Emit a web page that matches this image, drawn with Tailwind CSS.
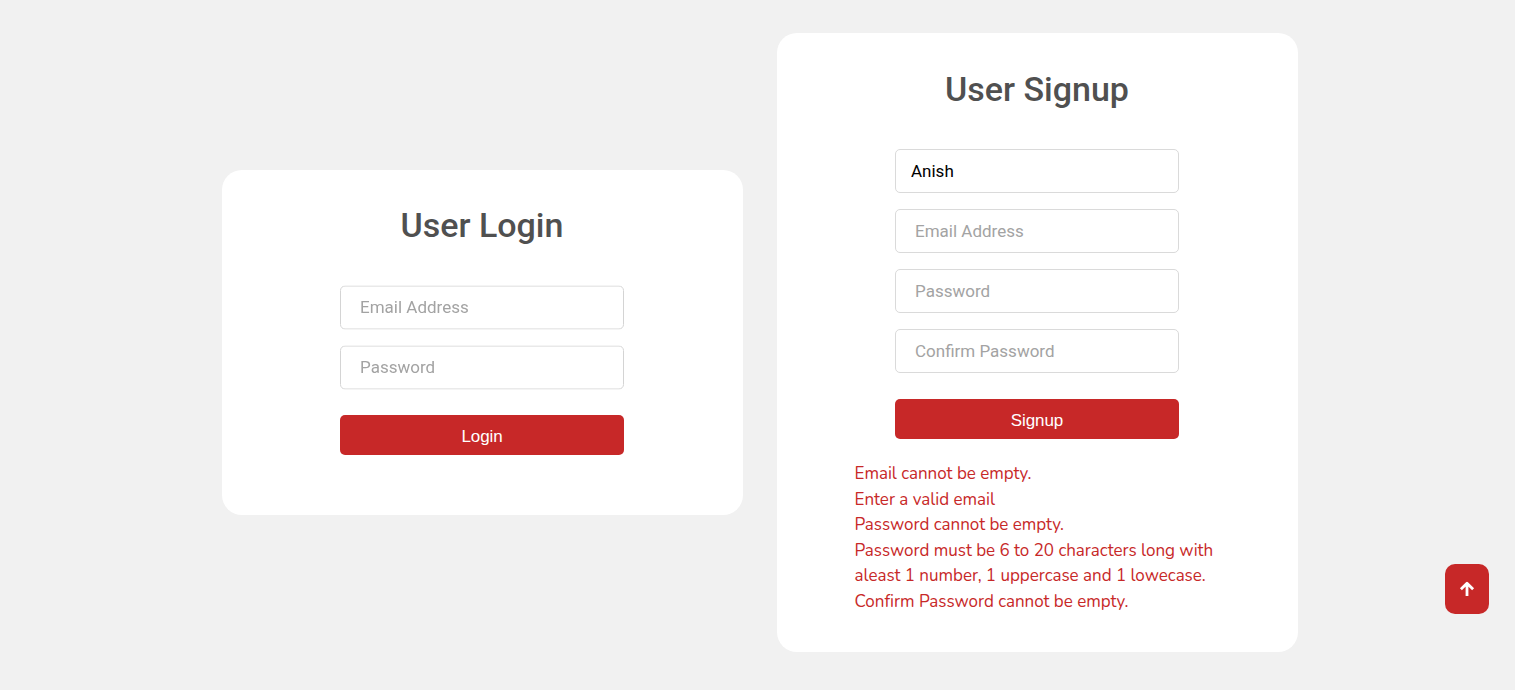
<!DOCTYPE html>
<html lang="en">
<head>
<meta charset="utf-8">
<title>Login and Signup</title>
<script src="https://cdn.jsdelivr.net/npm/@tailwindcss/browser@4"></script>
</head>
<body class="bg-[#f1f1f1] font-[Roboto,sans-serif]">
<main class="flex h-[690px] items-center justify-center gap-[34px] pb-[5px] pl-[5px]">
  <section class="flex h-[345px] w-[521px] flex-col items-center rounded-[20px] bg-white pt-[35px] pr-px">
    <h2 class="h-[41px] text-[34px] leading-[41px] font-medium text-[#505050]">User Login</h2>
    <form class="mt-[39px] flex w-[284px] flex-col gap-4">
      <input class="h-[44px] translate-y-[0.5px] rounded-[5px] border border-[#d4d4d4] px-[19px] pb-[2px] text-[17px] will-change-transform placeholder:text-[#a3a3a3]" placeholder="Email Address">
      <input class="h-[44px] translate-y-[0.5px] rounded-[5px] border border-[#d4d4d4] px-[19px] pb-[2px] text-[17px] will-change-transform placeholder:text-[#a3a3a3]" placeholder="Password">
      <button type="button" class="mt-[10px] h-10 rounded-[5px] bg-[#c72828] pt-[4px] font-['Liberation_Sans',sans-serif] text-[17px] tracking-[-0.1px] text-white">Login</button>
    </form>
  </section>
  <section class="flex h-[619px] w-[521px] flex-col items-center rounded-[20px] bg-white pt-[36px] pr-px">
    <h2 class="h-[41px] text-[34px] leading-[41px] font-medium text-[#505050]">User Signup</h2>
    <form class="mt-[39px] flex w-[284px] flex-col gap-4">
      <input class="h-[44px] rounded-[5px] border border-[#dadada] px-[15px] text-[17px] text-black" value="Anish">
      <input class="h-[44px] rounded-[5px] border border-[#dadada] px-[19px] text-[17px] placeholder:text-[#a3a3a3]" placeholder="Email Address">
      <input class="h-[44px] rounded-[5px] border border-[#dadada] px-[19px] text-[17px] placeholder:text-[#a3a3a3]" placeholder="Password">
      <input class="h-[44px] rounded-[5px] border border-[#dadada] px-[19px] text-[17px] placeholder:text-[#a3a3a3]" placeholder="Confirm Password">
      <button type="button" class="mt-[10px] h-10 rounded-[5px] bg-[#c72828] pt-[4px] font-['Liberation_Sans',sans-serif] text-[17px] tracking-[-0.1px] text-white">Signup</button>
    </form>
    <div class="mt-[22px] w-[365px] font-[Nunito,'Open_Sans',sans-serif] text-[17px] leading-[25.5px] tracking-[-0.02px] [font-variant-ligatures:common-ligatures] whitespace-nowrap text-[#c72828]">
      <p>Email cannot be empty.</p>
      <p>Enter a valid email</p>
      <p>Password cannot be empty.</p>
      <p>Password must be 6 to 20 characters long with</p>
      <p>aleast 1 number, 1 uppercase and 1 lowecase.</p>
      <p>Confirm Password cannot be empty.</p>
    </div>
  </section>
</main>
<a href="#" aria-label="Back to top" class="fixed right-[26px] bottom-[76px] flex h-[50px] w-[44px] items-center justify-center rounded-[10px] bg-[#c72828]">
  <svg class="h-[16px] w-[16px]" viewBox="0 0 16 16" fill="none" stroke="#fff" stroke-width="2.8"><path d="M8 15V2.6M1.9 8.3L8 2.3L14.1 8.3" stroke-linejoin="round"/></svg>
</a>
</body>
</html>
